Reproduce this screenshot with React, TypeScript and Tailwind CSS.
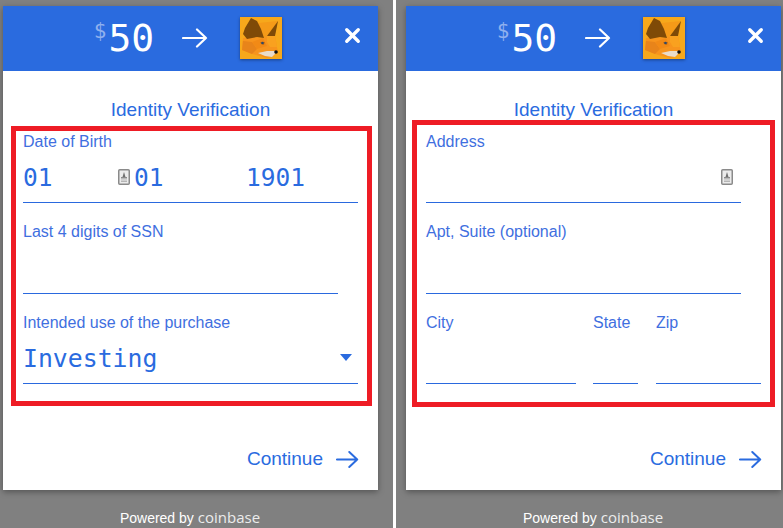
import React from 'react';
import { X } from 'lucide-react';

const SANS = "font-['Liberation_Sans',Arial,sans-serif]";
const MONO = "font-['DejaVu_Sans_Mono',monospace]";

const Arrow: React.FC<{ className?: string }> = ({ className }) => (
  <svg viewBox="0 0 26 20" fill="none" stroke="currentColor" strokeWidth="2.200" className={className}>
    <path d="M1 10h23M15 1.5 24 10l-9 8.5" strokeLinecap="round" strokeLinejoin="round" />
  </svg>
);

const Fox: React.FC = () => (
  <div className="w-[42px] h-[42px] shadow-[0_1px_3px_rgba(0,0,0,0.4)]">
    <svg viewBox="0 0 42 42" className="w-full h-full block">
      <rect width="42" height="42" fill="#f7a81b" />
      <path d="M18 6 38 4 27 19 23 21Z" fill="#f59a18" />
      <path d="M3 21 17 20 23 21 27 19 35 19 37 30 38 35 32 40 27 41 12 37 2 33Z" fill="#f7941d" />
      <path d="M3 17 5 11 11 1 17 4 21 12 24 21 17 20 7 22Z" fill="#7f4a07" />
      <path d="M38 4 27 19 35 19Z" fill="#7f4a07" />
      <path d="M2 33 3 24 12 25 17 32 12 37Z" fill="#e8841a" />
      <path d="M17 32 27 29 24 23 23 21 12 25Z" fill="#f28a16" />
      <path d="M27 19 35 19 37 30 30 30 27 25Z" fill="#f9a11f" />
      <path d="M18 36 27 34 35 34 35 37 32 40 25 39Z" fill="#e9dccb" />
      <path d="M20 25 25 25 24 28 21 27Z" fill="#c96f10" />
      <circle cx="22.500" cy="26" r="1.300" fill="#2f4a6b" />
      <circle cx="36" cy="35" r="1.800" fill="#111111" />
    </svg>
  </div>
);

// the little card glyph the password manager drops into the field
const AutofillIcon: React.FC = () => (
  <svg viewBox="0 0 12 16" className="w-3 h-4 block">
    <rect x="0.750" y="0.750" width="10.500" height="14.500" rx="1" fill="#ececec" stroke="#8a8a8a" strokeWidth="1.500" />
    <path d="M6 3 7.500 8h-3Z" fill="#6f6f6f" />
    <rect x="3" y="8" width="6" height="1.500" fill="#8a8a8a" />
    <rect x="3" y="10.500" width="6" height="1" fill="#b5b5b5" />
    <rect x="3" y="12" width="6" height="1" fill="#b5b5b5" />
  </svg>
);

const Label: React.FC<{ children: React.ReactNode }> = ({ children }) => (
  <div className={`${SANS} text-[16px] leading-[18px] text-[#3f6fe0]`}>{children}</div>
);

const Field: React.FC<{ label: string; className?: string; lineClass?: string; children?: React.ReactNode }> = ({
  label,
  className,
  lineClass,
  children,
}) => (
  <div className={className}>
    <Label>{label}</Label>
    <div className={`h-[52px] border-b border-[#2a69de] flex items-center ${lineClass ?? ''}`}>{children}</div>
  </div>
);

const Card: React.FC<{ boxClass: string; children: React.ReactNode }> = ({ boxClass, children }) => (
  <div className="w-[375px] flex flex-col">
    <div className="h-[484px] bg-white shadow-[0_2px_6px_rgba(0,0,0,0.35)] flex flex-col">
      <div className="h-[65px] bg-[#2a6bdf] relative flex items-center justify-center shrink-0">
        <div className="flex items-center mr-[5px]">
          <span className={`${MONO} text-[#8fb0ee] text-[21px] leading-none self-start mt-[2px]`}>$</span>
          <span className={`${MONO} text-white text-[38px] leading-none mt-[-1px] ml-[2px]`}>50</span>
          <Arrow className="w-[26px] h-[20px] text-white ml-[28px] mt-[-2px]" />
          <div className="ml-[32px] mt-[-2px]">
            <Fox />
          </div>
        </div>
        <X className="absolute right-[14px] top-[18px] w-[23px] h-[23px] text-white" strokeWidth={3.5} />
      </div>
      <div className={`${SANS} text-center text-[19px] leading-5 text-[#2a6bdf] mt-[29px]`}>Identity Verification</div>
      <div className={`border-[5px] border-[#ee1c25] ${boxClass}`}>{children}</div>
      <div className={`${SANS} mt-auto mb-[19px] mr-[19px] flex items-center justify-end gap-[13px] text-[19px] leading-6 text-[#2a6bdf]`}>
        Continue
        <Arrow className="w-[23px] h-[19px]" />
      </div>
    </div>
    <div className={`${SANS} text-[14px] leading-4 text-white text-center mt-[19px] flex items-baseline justify-center gap-[4px] ml-[-1px]`}>
      Powered by
      <span className="font-['Open_Sans',sans-serif] font-medium text-[15px] text-[#ececec]">coinbase</span>
    </div>
  </div>
);

export default function App() {
  return (
    <div className="w-[783px] h-[528px] overflow-hidden bg-[#808080] flex pt-[6px] pl-[3px]">
      <Card boxClass="mt-[6px] h-[280px] pt-[2px] ml-[8px] mr-[6px] pl-[7px]">
        <Field label="Date of Birth" className="w-[335px]">
          <div className={`${MONO} text-[#2a6bdf] text-[24.500px] flex items-center w-full pt-[4px]`}>
            <span className="w-[95px]">01</span>
            <div className="mt-[-4px]">
              <AutofillIcon />
            </div>
            <span className="ml-[4px] w-[112px]">01</span>
            <span>1901</span>
          </div>
        </Field>
        <Field label="Last 4 digits of SSN" className="mt-[20px] w-[315px]" lineClass="h-[53px]" />
        <Field label="Intended use of the purchase" className="mt-[20px] w-[335px]" lineClass="justify-between">
          <span className={`${MONO} text-[#2a6bdf] text-[24.800px] pt-[2px]`}>Investing</span>
          <span className="mr-[6px] w-0 h-0 border-x-[6px] border-x-transparent border-t-[7px] border-t-[#2a6bdf]" />
        </Field>
      </Card>
      <div className="ml-[15px] w-[3px] h-[528px] bg-white mt-[-6px] mr-[10px]" />
      <Card boxClass="h-[287px] pt-[8px] ml-[6px] mr-[6px] pl-[9px]">
        <Field label="Address" className="w-[315px]" lineClass="justify-end">
          <div className="mr-[8px]">
            <AutofillIcon />
          </div>
        </Field>
        <Field label="Apt, Suite (optional)" className="mt-[20px] w-[315px]" lineClass="h-[53px]" />
        <div className="flex mt-[20px]">
          <Field label="City" className="w-[150px]" />
          <Field label="State" className="w-[45px] ml-[17px]" />
          <Field label="Zip" className="w-[105px] ml-[18px]" />
        </div>
      </Card>
    </div>
  );
}
